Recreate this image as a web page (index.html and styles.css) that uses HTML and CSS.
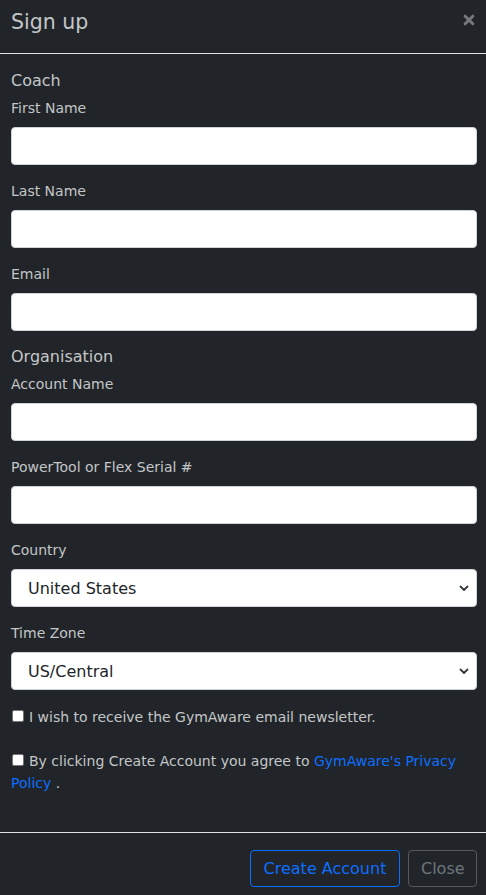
FILE: index.html
```html
<!DOCTYPE html>
<html>
<head>
<meta charset="utf-8">
<link rel="stylesheet" href="styles.css">
</head>
<body>
<div class="modal">
  <div class="modal-header">
    <h4 class="modal-title">Sign up</h4>
    <button class="btn-close" type="button" aria-label="Close">
      <svg width="12" height="12" viewBox="0 0 12 12"><path d="M2.2 2.2L9.8 9.8M9.8 2.2L2.2 9.8" stroke="#76797c" stroke-width="3" stroke-linecap="round"/></svg>
    </button>
  </div>
  <form class="modal-body">
    <h5 class="section">Coach</h5>
    <div class="field"><label>First Name</label><input type="text"></div>
    <div class="field"><label>Last Name</label><input type="text"></div>
    <div class="field"><label>Email</label><input type="email"></div>
    <h5 class="section">Organisation</h5>
    <div class="field"><label>Account Name</label><input type="text"></div>
    <div class="field"><label>PowerTool or Flex Serial #</label><input type="text"></div>
    <div class="field"><label>Country</label>
      <div class="select"><span>United States</span>
        <svg width="10" height="7" viewBox="0 0 10 7"><path d="M1.5 1.5L5 5L8.5 1.5" fill="none" stroke="#343a40" stroke-width="1.8" stroke-linecap="round" stroke-linejoin="round"/></svg>
      </div>
    </div>
    <div class="field"><label>Time Zone</label>
      <div class="select"><span>US/Central</span>
        <svg width="10" height="7" viewBox="0 0 10 7"><path d="M1.5 1.5L5 5L8.5 1.5" fill="none" stroke="#343a40" stroke-width="1.8" stroke-linecap="round" stroke-linejoin="round"/></svg>
      </div>
    </div>
    <div class="check"><span class="box"></span><span class="ctext">I wish to receive the GymAware email newsletter.</span></div>
    <div class="check second"><span class="box"></span><span class="ctext">By clicking Create Account you agree to <a href="#">GymAware's Privacy Policy</a> .</span></div>
  </form>
  <div class="modal-footer">
    <button class="btn btn-primary" type="button">Create Account</button>
    <button class="btn btn-secondary" type="button">Close</button>
  </div>
</div>
</body>
</html>
```
FILE: styles.css
```css
html, body {
  margin: 0;
  padding: 0;
  background: #212529;
}
body {
  font-family: "DejaVu Sans", "Noto Sans", sans-serif;
  color: #c4c6c8;
  width: 486px;
  height: 895px;
  overflow: hidden;
}
.modal {
  display: flex;
  flex-direction: column;
  height: 895px;
}
.modal-header {
  display: flex;
  align-items: flex-start;
  justify-content: space-between;
  padding: 9px 11px 0 11px;
  height: 44px;
  border-bottom: 1px solid #dee2e6;
}
.modal-title {
  margin: 0;
  font-size: 20.5px;
  font-weight: normal;
  line-height: 27px;
  color: #c4c6c8;
}
.btn-close {
  border: 0;
  background: none;
  padding: 0;
  margin: 5px 0 0 0;
  width: 12px;
  height: 12px;
  display: flex;
}
.modal-body {
  display: flex;
  flex-direction: column;
  padding: 17px 9px 0 11px;
  flex: 1;
}
.section {
  margin: 0 0 8px 0;
  font-size: 16px;
  font-weight: normal;
  line-height: 19px;
  color: #c4c6c8;
}
.field {
  display: flex;
  flex-direction: column;
  margin-bottom: 16px;
}
.field label {
  font-size: 14px;
  line-height: 21px;
  margin-bottom: 8px;
}
.field input, .select {
  box-sizing: border-box;
  height: 38px;
  width: 466px;
  margin: 0;
  border: 1px solid #ced4da;
  border-radius: 4px;
  background: #fff;
  font-family: inherit;
  font-size: 16px;
}
.select {
  display: flex;
  align-items: center;
  justify-content: space-between;
  padding: 0 7px 0 16px;
  color: #212529;
}
.select span {
  font-size: 16px;
}
.check {
  display: flex;
  align-items: flex-start;
  font-size: 14px;
  line-height: 22px;
  margin-top: 0;
}
.check.second {
  margin-top: 22px;
  width: 466px;
}
.box {
  flex: none;
  box-sizing: border-box;
  width: 12px;
  height: 12px;
  margin: 4px 5px 0 1px;
  background: #fff;
  border: 1px solid #767676;
  border-radius: 2px;
}
.ctext {
  display: block;
}
.check.second .ctext {
  margin-left: -18px;
  text-indent: 18px;
}
.ctext a {
  color: #0d6efd;
  text-decoration: none;
}
.modal-footer {
  display: flex;
  justify-content: flex-end;
  gap: 8px;
  padding: 17px 9px 8px;
  border-top: 1px solid #dee2e6;
}
.btn {
  box-sizing: border-box;
  height: 37px;
  padding: 0 12px;
  border-radius: 4px;
  background: transparent;
  font-family: inherit;
  font-size: 16px;
}
.btn-primary {
  border: 1px solid #0d6efd;
  color: #0d6efd;
  width: 150px;
}
.btn-secondary {
  border: 1px solid #55595d;
  color: #6c757d;
  width: 69px;
}
```
